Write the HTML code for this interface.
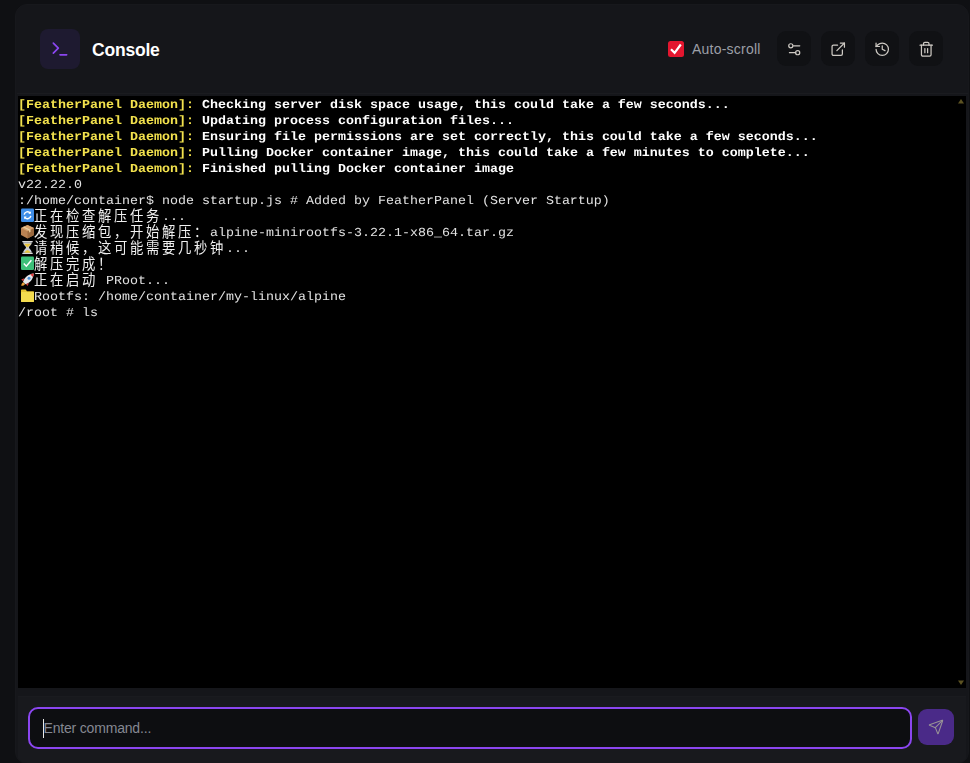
<!DOCTYPE html>
<html lang="zh">
<head>
<meta charset="utf-8">
<title>Console</title>
<style>
*{box-sizing:border-box;margin:0;padding:0}
html,body{width:970px;height:763px;overflow:hidden;background:#0f1013;font-family:"Liberation Sans","Noto Sans CJK SC",sans-serif;}
.card{position:absolute;left:15px;top:4px;width:954px;height:760px;background:#15161a;border:1px solid #17181c;border-radius:12px;overflow:hidden}
.in{position:absolute;left:1px;top:0;width:951px;height:760px}
.hdr{position:absolute;left:0;top:0;width:951px;height:89px;border-bottom:1px solid #1a1b1f;}
.ibox{position:absolute;left:23px;top:24px;width:40px;height:40px;border-radius:8px;background:#1e1a30;}
.ibox svg{position:absolute;left:10px;top:10px}
.title{position:absolute;left:75px;top:34px;font-size:17.5px;font-weight:700;color:#fff;line-height:22px;letter-spacing:-0.2px}
.cb{position:absolute;left:651px;top:36px;width:16px;height:16px;border-radius:2.5px;background:#e3162f;}
.cb svg{position:absolute;left:0;top:0}
.lbl{position:absolute;left:675px;top:35px;font-size:14px;color:#9c9fa7;line-height:18px;letter-spacing:.22px}
.btn{position:absolute;top:26.300px;width:34.400px;height:35.200px;border-radius:9px;background:#101114;}
.btn svg{position:absolute;left:8.950px;top:9.500px;width:16.500px;height:16.500px}
.term{position:absolute;left:1px;top:91px;width:948px;height:592px;overflow:hidden;color:#fff;will-change:transform}
.tbg{position:absolute;left:1px;top:91px;width:948px;height:592px;background:#000}
.ln{display:block;height:16px;white-space:pre;font-size:0;line-height:0}
.l{display:inline-block;height:16px;line-height:16px;vertical-align:top;font-family:"Liberation Mono",monospace;font-size:13.333px;text-rendering:geometricPrecision;white-space:pre;transform:scaleY(.92);transform-origin:0 12px;position:relative;top:2px;color:#e2e2e2}
.b{font-weight:700;color:#fff}
.y{color:#f3e24d}
.cj{display:inline-block;height:16px;line-height:16px;vertical-align:top;font-family:"Noto Sans CJK SC","Noto Serif CJK SC",sans-serif;letter-spacing:2.667px;font-size:13.333px;white-space:pre;color:#f0f0f0;position:relative;top:-0.400px;transform:scaleY(1.1);transform-origin:0 14px}
.em{display:inline-block;width:16px;height:16px;vertical-align:top;position:relative}
.em svg{position:absolute;left:0;top:0;width:16px;height:16px}
.sa{position:absolute;left:940px;width:6px;height:5px}
.band{position:absolute;left:1px;top:683px;width:948px;height:9px;background:#15161a;border-bottom:1px solid #1a1b1f}
.foot{position:absolute;left:1px;top:692px;width:948px;height:70px;background:#18191d}
.inp{position:absolute;left:11px;top:702px;width:884px;height:42px;border:2px solid #8b46f0;border-radius:10px;background:#0d0e11;}
.inp span{position:absolute;left:13.500px;top:10px;font-size:14px;letter-spacing:-0.180px;color:#858892;line-height:18px}
.inp i{position:absolute;left:13px;top:10px;width:1px;height:19px;background:#e8e8e8}
.send{position:absolute;left:901px;top:704px;width:36px;height:36px;border-radius:9px;background:#4a2a88;}
.send svg{position:absolute;left:10px;top:10px}
</style>
</head>
<body>
<div class="card"><div class="in">
  <div class="hdr">
    <div class="ibox"><svg width="20" height="20" viewBox="0 0 24 24" fill="none" stroke="#8b46f0" stroke-width="2" stroke-linecap="round" stroke-linejoin="round"><polyline points="4 17 10 11 4 5"/><line x1="12" y1="19" x2="20" y2="19"/></svg></div>
    <div class="title">Console</div>
    <div class="cb"><svg width="16" height="16" viewBox="0 0 16 16" fill="none" stroke="#fff" stroke-width="2.200" stroke-linecap="butt" stroke-linejoin="miter"><polyline points="3 8.300 6.600 11.900 12.800 3.500"/></svg></div>
    <div class="lbl">Auto-scroll</div>
    <div class="btn" style="left:760px"><svg width="16" height="16" viewBox="0 0 24 24" fill="none" stroke="#cdc9c3" stroke-width="1.800" stroke-linecap="round" stroke-linejoin="round"><path d="M20 7h-9"/><path d="M14 17H5"/><circle cx="17" cy="17" r="3"/><circle cx="7" cy="7" r="3"/></svg></div>
    <div class="btn" style="left:803.800px"><svg width="16" height="16" viewBox="0 0 24 24" fill="none" stroke="#cdc9c3" stroke-width="1.800" stroke-linecap="round" stroke-linejoin="round"><path d="M15 3h6v6"/><path d="M10 14 21 3"/><path d="M18 13v6a2 2 0 0 1-2 2H5a2 2 0 0 1-2-2V8a2 2 0 0 1 2-2h6"/></svg></div>
    <div class="btn" style="left:848px"><svg width="16" height="16" viewBox="0 0 24 24" fill="none" stroke="#cdc9c3" stroke-width="1.800" stroke-linecap="round" stroke-linejoin="round"><path d="M3 12a9 9 0 1 0 9-9 9.75 9.75 0 0 0-6.74 2.74L3 8"/><path d="M3 3v5h5"/><path d="M12 7v5l4 2"/></svg></div>
    <div class="btn" style="left:891.800px"><svg width="16" height="16" viewBox="0 0 24 24" fill="none" stroke="#cdc9c3" stroke-width="1.800" stroke-linecap="round" stroke-linejoin="round"><path d="M3 6h18"/><path d="M19 6v14c0 1-1 2-2 2H7c-1 0-2-1-2-2V6"/><path d="M8 6V4c0-1 1-2 2-2h4c1 0 2 1 2 2v2"/><line x1="10" y1="11" x2="10" y2="17"/><line x1="14" y1="11" x2="14" y2="17"/></svg></div>
  </div>
  <div class="tbg"></div>
  <div class="term"><div class="ln"><span class="l b y">[FeatherPanel Daemon]:</span><span class="l b"> Checking server disk space usage, this could take a few seconds...</span></div><div class="ln"><span class="l b y">[FeatherPanel Daemon]:</span><span class="l b"> Updating process configuration files...</span></div><div class="ln"><span class="l b y">[FeatherPanel Daemon]:</span><span class="l b"> Ensuring file permissions are set correctly, this could take a few seconds...</span></div><div class="ln"><span class="l b y">[FeatherPanel Daemon]:</span><span class="l b"> Pulling Docker container image, this could take a few minutes to complete...</span></div><div class="ln"><span class="l b y">[FeatherPanel Daemon]:</span><span class="l b"> Finished pulling Docker container image</span></div><div class="ln"><span class="l">v22.22.0</span></div><div class="ln"><span class="l">:/home/container$ node startup.js # Added by FeatherPanel (Server Startup)</span></div><div class="ln"><span class="em"><svg viewBox="0 0 16 16"><rect x="3" y="0.5" width="13" height="13.5" rx="1.2" fill="#3f8ee8"/><path d="M6.2 6.6a3.4 3.4 0 0 1 6-1.6M12.8 7.8a3.4 3.4 0 0 1-6 1.6" fill="none" stroke="#fff" stroke-width="1.5"/><path d="M12.9 3.2v2.6h-2.6zM6.1 11.2V8.6h2.6z" fill="#fff"/></svg></span><span class="cj">正在检查解压任务</span><span class="l">...</span></div><div class="ln"><span class="em"><svg viewBox="0 0 16 16"><path d="M9.5 1 16 4v7l-6.5 3.5L3 11V4z" fill="#b98252"/><path d="M9.5 7.2 16 4v7l-6.5 3.5z" fill="#9c6a3f"/><path d="M9.5 1 16 4 9.5 7.2 3 4z" fill="#d7a36f"/><path d="M6 2.6l6.5 3.1v2.2l-1.4.7V6.5L4.7 3.3z" fill="#e8cf9f"/></svg></span><span class="cj">发现压缩包，开始解压：</span><span class="l">alpine-minirootfs-3.22.1-x86_64.tar.gz</span></div><div class="ln"><span class="em"><svg viewBox="0 0 16 16"><path d="M4.300 1h10.400v1.300H4.300zM4.300 12.700h10.400V14H4.300z" fill="#d9d9d9"/><path d="M5.200 2.200h8.600c0 3-2.800 3.800-2.800 5.300s2.800 2.300 2.800 5.300H5.200c0-3 2.800-3.800 2.800-5.300S5.200 5.200 5.200 2.200z" fill="#c9ccd3"/><path d="M6.300 3.800h6.400c-.6 1.800-2.400 2.600-3.200 3.800C8.700 6.400 6.900 5.600 6.300 3.800zM6.600 12.800c.3-1.600 1.700-2.200 2.900-2.900 1.200.7 2.600 1.300 2.900 2.900z" fill="#e9c53c"/></svg></span><span class="cj">请稍候，这可能需要几秒钟</span><span class="l">...</span></div><div class="ln"><span class="em"><svg viewBox="0 0 16 16"><rect x="3" y="0.5" width="13" height="13.5" rx="1.2" fill="#3dbf78"/><path d="M5.800 7.600 8.300 10.200 13.400 4.300" fill="none" stroke="#fff" stroke-width="1.500"/></svg></span><span class="cj">解压完成！</span></div><div class="ln"><span class="em"><svg viewBox="0 0 16 16"><path d="M3.200 13.800c.2-1.800.9-3 2.200-3.600l1.700 1.700c-.6 1.300-2 1.800-3.900 1.900z" fill="#e9a23b"/><path d="M5 9.800C6.500 5.500 10 2 15.800 1.400 15.300 7 12 10.700 7.600 12.300z" fill="#e4e6ea"/><path d="M12.300 2.400c1.100-.5 2.300-.9 3.500-1C15.700 2.600 15.400 3.800 14.900 5z" fill="#e03a3a"/><circle cx="11" cy="6.200" r="1.500" fill="#4a90d9"/><path d="M6.300 6.300 3.200 7.600l2 1.700zM10.900 10.900l-1.300 3.200-1.700-2z" fill="#d23b3b"/></svg></span><span class="cj">正在启动</span><span class="l"> PRoot...</span></div><div class="ln"><span class="em"><svg viewBox="0 0 16 16"><path d="M3 2.600c0-.6.400-1 1-1h3.600l1.400 1.600H15c.6 0 1 .4 1 1v8.800c0 .6-.4 1-1 1H4c-.6 0-1-.4-1-1z" fill="#e6c435"/><path d="M3 5c0-.6.400-1 1-1h11c.6 0 1 .4 1 1v8c0 .6-.4 1-1 1H4c-.6 0-1-.4-1-1z" fill="#f3db4f"/></svg></span><span class="l">Rootfs: /home/container/my-linux/alpine</span></div><div class="ln"><span class="l">/root # ls</span></div><svg class="sa" style="top:2.600px" viewBox="0 0 6 5"><path d="M3 0 6 4.500H0z" fill="#5c5222"/></svg><svg class="sa" style="top:584.300px" viewBox="0 0 6 5"><path d="M0 .5h6L3 5z" fill="#5c5222"/></svg></div>
  <div class="band"></div><div class="foot"></div>
  <div class="inp"><i></i><span>Enter command...</span></div>
  <div class="send"><svg width="16" height="16" viewBox="0 0 24 24" fill="none" stroke="#989296" stroke-width="1.600" stroke-linecap="round" stroke-linejoin="round"><path d="M14.536 21.686a.5.5 0 0 0 .937-.024l6.5-19a.496.496 0 0 0-.635-.635l-19 6.5a.5.5 0 0 0-.024.937l7.93 3.18a2 2 0 0 1 1.112 1.11z"/><path d="m21.854 2.147-10.94 10.939"/></svg></div>
</div></div>
</body>
</html>
